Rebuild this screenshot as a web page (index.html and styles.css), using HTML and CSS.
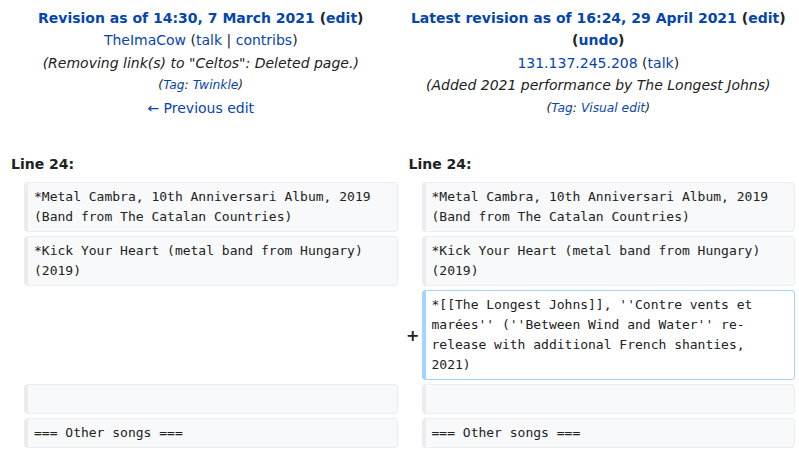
FILE: index.html
```html
<!DOCTYPE html>
<html lang="en">
<head>
<meta charset="utf-8">
<title>Diff</title>
<link rel="stylesheet" href="styles.css">
</head>
<body>
<div class="diff">
  <div class="head">
    <div class="title"><a href="#">Revision as of 14:30, 7 March 2021</a> (<a href="#">edit</a>)</div>
    <div><a class="plain" href="#">TheImaCow</a> (<a class="plain" href="#">talk</a> | <a class="plain" href="#">contribs</a>)</div>
    <div class="comment">(Removing link(s) to "Celtos": Deleted page.)</div>
    <div class="tags">(<a href="#">Tag</a>: <a href="#">Twinkle</a>)</div>
    <div><a class="plain" href="#">← Previous edit</a></div>
  </div>
  <div class="head">
    <div class="title"><a href="#">Latest revision as of 16:24, 29 April 2021</a> (<a href="#">edit</a>)<br>(<a href="#">undo</a>)</div>
    <div><a class="plain" href="#">131.137.245.208</a> (<a class="plain" href="#">talk</a>)</div>
    <div class="comment">(Added 2021 performance by The Longest Johns)</div>
    <div class="tags">(<a href="#">Tag</a>: <a href="#">Visual edit</a>)</div>
  </div>

  <div class="lineno">Line 24:</div>
  <div class="lineno">Line 24:</div>

  <div class="marker"></div>
  <div class="line">*Metal Cambra, 10th Anniversari Album, 2019 (Band from The Catalan Countries)</div>
  <div class="marker"></div>
  <div class="line">*Metal Cambra, 10th Anniversari Album, 2019 (Band from The Catalan Countries)</div>

  <div class="marker"></div>
  <div class="line">*Kick Your Heart (metal band from Hungary) (2019)</div>
  <div class="marker"></div>
  <div class="line">*Kick Your Heart (metal band from Hungary) (2019)</div>

  <div class="marker"></div>
  <div class="empty"></div>
  <div class="marker plus">+</div>
  <div class="line added">*[[The Longest Johns]], ''Contre vents et marées'' (''Between Wind and Water'' re-release with additional French shanties, 2021)</div>

  <div class="marker"></div>
  <div class="line"></div>
  <div class="marker"></div>
  <div class="line"></div>

  <div class="marker"></div>
  <div class="line">=== Other songs ===</div>
  <div class="marker"></div>
  <div class="line">=== Other songs ===</div>
</div>
</body>
</html>
```
FILE: styles.css
```css
html, body {
  margin: 0;
  padding: 0;
  background: #ffffff;
}
body {
  font-family: "DejaVu Sans", sans-serif;
  font-size: 14px;
  color: #202122;
}
a {
  color: #0645ad;
  text-decoration: none;
}
.diff {
  display: grid;
  grid-template-columns: 16px 1fr 16px 1fr;
  column-gap: 4px;
  row-gap: 4px;
  padding: 4px;
}
.head {
  grid-column: span 2;
  text-align: center;
  line-height: 22.4px;
  padding: 3px 0 25px;
}
.title {
  font-weight: bold;
  white-space: nowrap;
}
.comment {
  font-style: italic;
}
.tags {
  font-style: italic;
  font-size: 12.25px;
}
.lineno {
  grid-column: span 2;
  font-weight: bold;
  line-height: 22px;
  padding: 5px 7px 3px;
}
.marker {
  display: flex;
  align-items: center;
  justify-content: flex-end;
}
.plus {
  font-weight: bold;
  font-size: 16px;
  margin-right: -2px;
}
.line {
  font-family: "DejaVu Sans Mono", monospace;
  font-size: 13px;
  line-height: 20px;
  min-height: 20px;
  padding: 4px 6px;
  background: #f8f9fa;
  border: 1px solid #eaecf0;
  border-left-width: 4px;
  border-radius: 4px;
  white-space: pre-wrap;
  overflow-wrap: break-word;
  color: #202122;
}
.line.added {
  background: #ffffff;
  border-color: #a3d3ff;
}
.empty {
  min-height: 20px;
}
```
